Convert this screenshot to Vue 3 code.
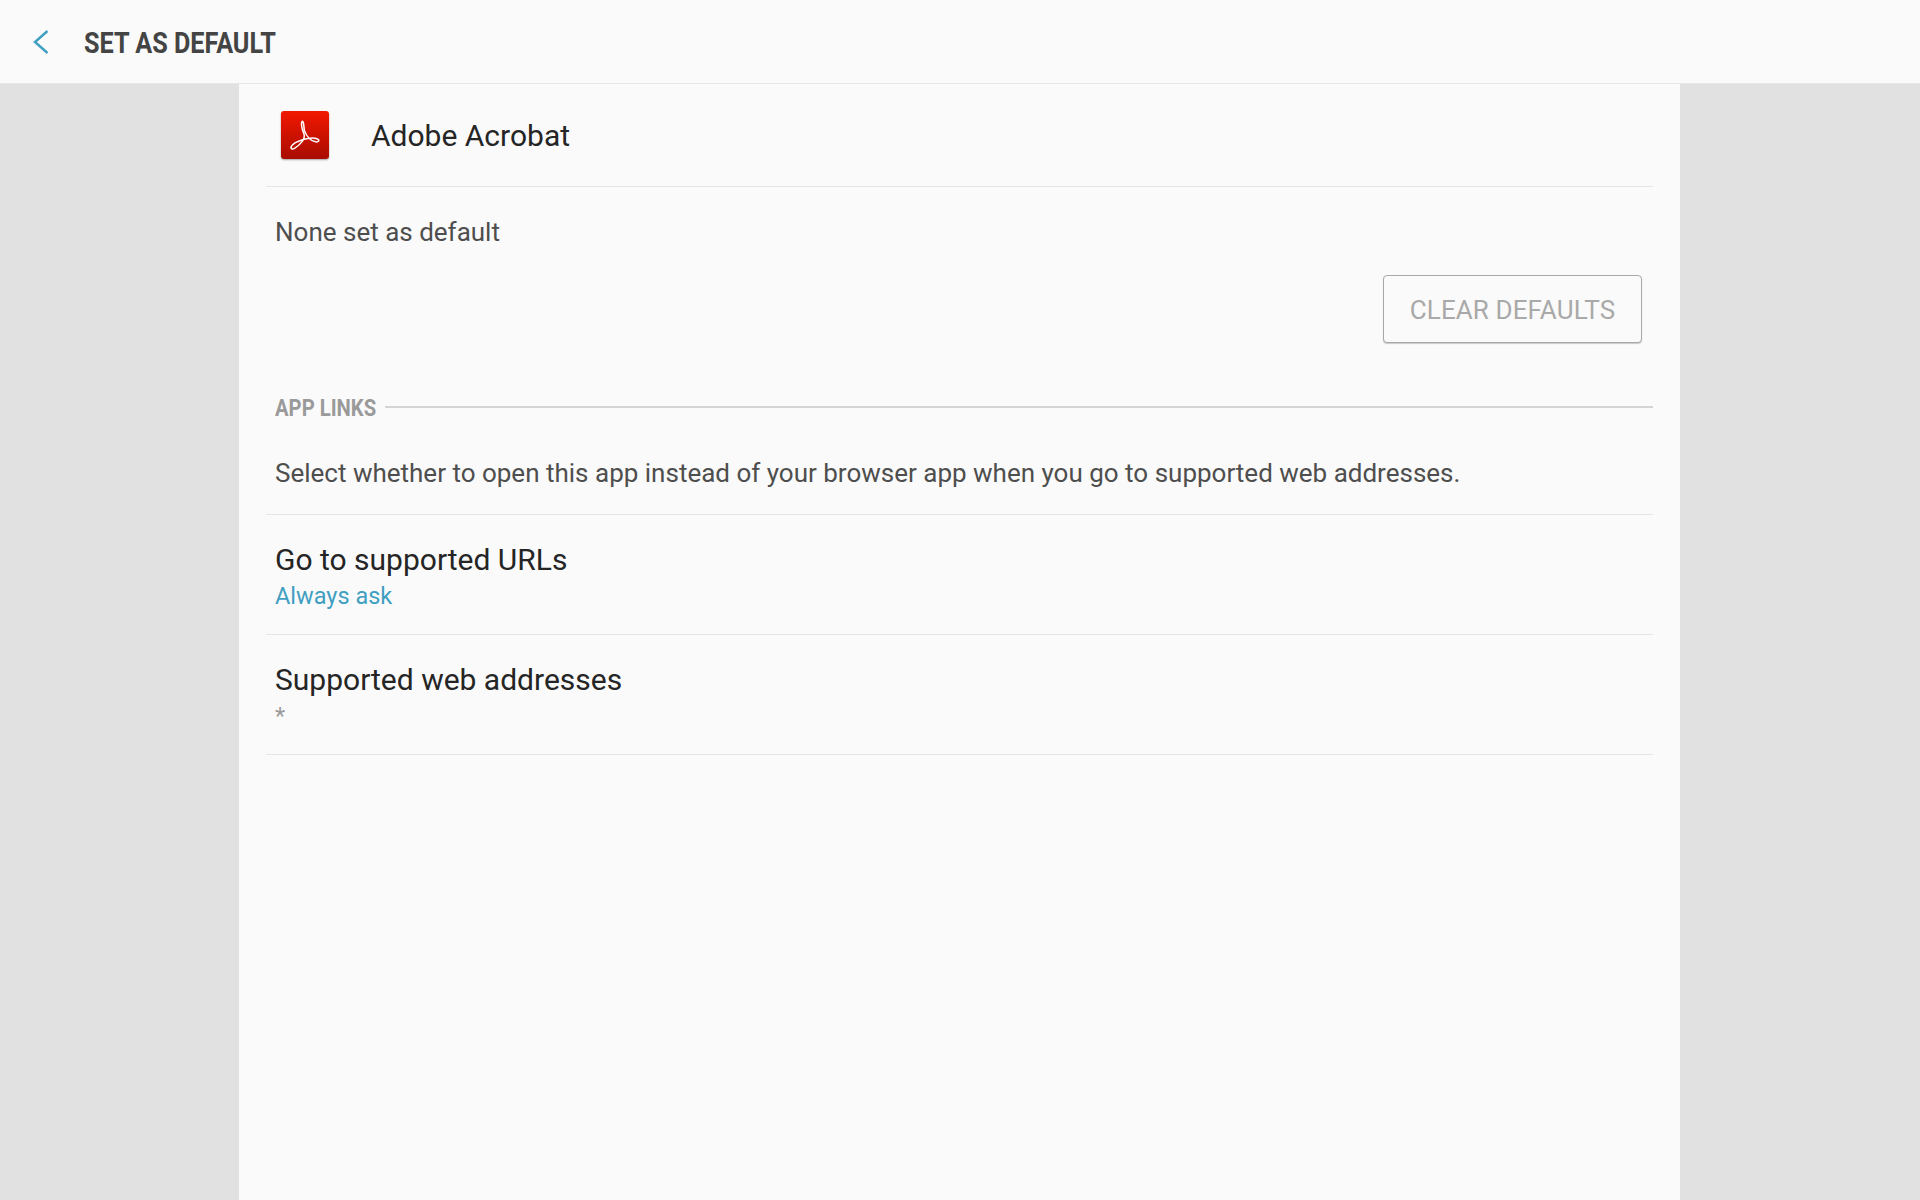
<template>
  <div class="page">
    <header class="top-bar">
      <button class="back-btn" aria-label="Back">
        <svg width="16" height="26" viewBox="0 0 16 26">
          <path d="M14.5 2 L2 13 L14.5 24" fill="none" stroke="#3f9fc1" stroke-width="2.4" />
        </svg>
      </button>
      <h1 class="title">SET AS DEFAULT</h1>
    </header>

    <main class="panel">
      <div class="app-row">
        <div class="app-icon">
          <svg width="48" height="48" viewBox="0 0 48 48">
            <path
              d="M21.5 10.2 C19.6 11 20.6 17.5 22.8 22.5 C25 27.5 19.5 33.5 13.5 37.4 C10.2 39.4 8.8 36.4 11.6 33.8 C16.5 29.6 27.5 26.2 34 27.2 C39.4 28.2 38.6 31.4 34.6 30.8 C30 30 25.6 25.4 23.6 20 C22.4 16.2 23.2 10.4 21.5 10.2 Z"
              fill="none"
              stroke="#fff"
              stroke-width="1.5"
            />
          </svg>
        </div>
        <span class="app-name">Adobe Acrobat</span>
      </div>

      <p class="none-set">None set as default</p>
      <div class="clear-row">
        <button class="clear-btn">CLEAR DEFAULTS</button>
      </div>

      <div class="section-head">
        <span class="section-label">APP LINKS</span>
        <span class="section-line"></span>
      </div>
      <p class="description">
        Select whether to open this app instead of your browser app when you go to supported web addresses.
      </p>

      <div class="list-row" v-for="row in rows" :key="row.title">
        <div class="row-title">{{ row.title }}</div>
        <div class="row-sub" :class="row.subClass">{{ row.sub }}</div>
      </div>
    </main>
  </div>
</template>

<script setup>
const rows = [
  { title: "Go to supported URLs", sub: "Always ask", subClass: "blue" },
  { title: "Supported web addresses", sub: "*", subClass: "grey" },
];
</script>

<style>
html,
body {
  margin: 0;
  background: #e1e1e1;
}
</style>

<style scoped>
.page {
  height: 1200px;
  display: flex;
  flex-direction: column;
  overflow: hidden;
  font-family: Roboto, "Liberation Sans", sans-serif;
  background: #e1e1e1;
}

.top-bar {
  height: 83px;
  flex: none;
  display: flex;
  align-items: center;
  background: #fafafa;
  border-bottom: 1px solid #e6e6e6;
}

.back-btn {
  margin-left: 33px;
  padding: 0;
  width: 16px;
  height: 26px;
  border: 0;
  background: none;
  display: block;
}

.back-btn svg {
  display: block;
}

.title {
  margin: 2px 0 0 35px;
  font-size: 29px;
  font-weight: 700;
  color: #444444;
  transform: scaleX(0.87);
  transform-origin: left center;
  white-space: nowrap;
}

.panel {
  flex: 1;
  width: 1441px;
  margin-left: 239px;
  box-sizing: border-box;
  padding: 0 27px;
  background: #fafafa;
}

.app-row {
  height: 102px;
  display: flex;
  align-items: center;
  border-bottom: 1px solid #e6e6e6;
}

.app-icon {
  width: 48px;
  height: 48px;
  margin-left: 15px;
  border-radius: 3px;
  background: linear-gradient(#f21800, #a80c00);
  box-shadow: 0 1px 2px rgba(0, 0, 0, 0.35);
}

.app-icon svg {
  display: block;
}

.app-name {
  margin-left: 42px;
  font-size: 30px;
  color: #252525;
}

.none-set {
  margin: 28px 0 0 9px;
  font-size: 26px;
  line-height: 34px;
  color: #4e4e4e;
}

.clear-row {
  display: flex;
  justify-content: flex-end;
  margin-top: 26px;
  padding-right: 11px;
}

.clear-btn {
  width: 259px;
  height: 68px;
  padding: 2px 0 0;
  box-sizing: border-box;
  border: 1px solid #a8a8a8;
  border-radius: 4px;
  background: #fafafa;
  box-shadow: 0 1px 1px rgba(0, 0, 0, 0.2);
  font-family: Roboto, "Liberation Sans", sans-serif;
  font-size: 26px;
  letter-spacing: 0.1px;
  color: #a9a9a9;
}

.section-head {
  display: flex;
  align-items: center;
  margin: 50px 0 0 9px;
  height: 30px;
}

.section-label {
  font-size: 23px;
  font-weight: 700;
  color: #9a9a9a;
  transform: scaleX(0.88);
  transform-origin: left center;
  width: 110px;
  white-space: nowrap;
}

.section-line {
  flex: 1;
  height: 2px;
  background: #d4d4d4;
  margin-top: -3px;
}

.description {
  margin: 0;
  padding: 33px 0 24px 9px;
  font-size: 26px;
  line-height: 34px;
  color: #4e4e4e;
  border-bottom: 1px solid #e6e6e6;
  white-space: nowrap;
}

.list-row {
  height: 119px;
  padding-left: 9px;
  border-bottom: 1px solid #e6e6e6;
}

.row-title {
  padding-top: 25px;
  font-size: 30px;
  line-height: 40px;
  color: #252525;
}

.row-sub {
  font-size: 23.5px;
  line-height: 32px;
}

.blue {
  color: #3f9fc1;
}

.grey {
  color: #9a9a9a;
}
</style>
